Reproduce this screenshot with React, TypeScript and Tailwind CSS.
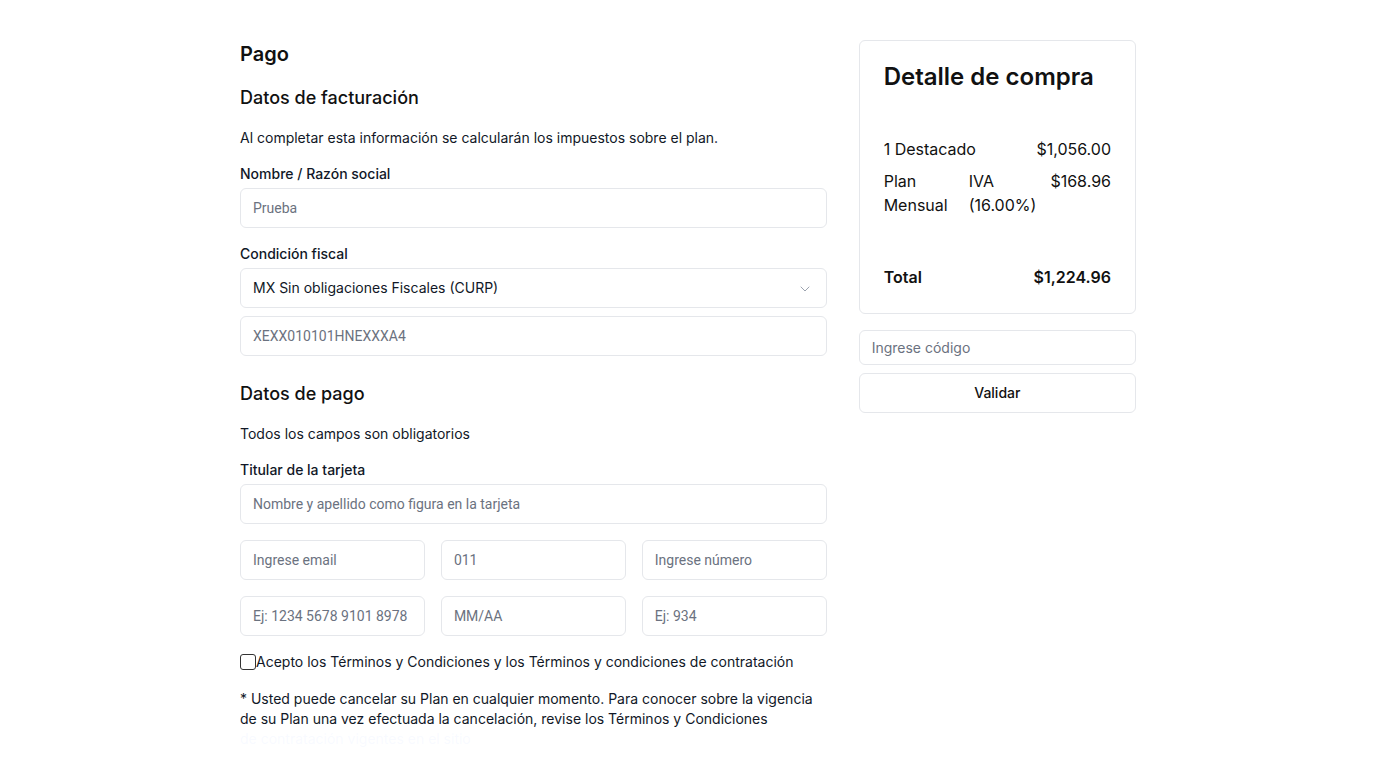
import { ChevronDown } from 'lucide-react';

const roboto = { fontFamily: 'Roboto, "Liberation Sans", sans-serif' };

const inputCls =
  'w-full h-10 px-3 rounded-md border border-[#e5e7eb] bg-white text-sm text-[#111827] placeholder:text-[#6b7280] outline-none';

const Field = ({ placeholder }: { placeholder: string }) => (
  <input className={inputCls} placeholder={placeholder} style={roboto} />
);

const App = () => {
  return (
    <div className="min-h-screen bg-white text-[#111111]" style={{ fontFamily: 'Inter, "Noto Sans", sans-serif' }}>
      <div className="max-w-4xl mx-auto pt-10 grid grid-cols-3 gap-8 items-start">
        {/* Left column: form */}
        <div className="col-span-2">
          <h1 className="text-xl leading-7 font-semibold">Pago</h1>

          <h2 className="mt-4 text-lg leading-7 font-medium">Datos de facturación</h2>
          <p className="mt-4 text-sm leading-5 text-[#111827]">
            Al completar esta información se calcularán los impuestos sobre el plan.
          </p>

          <label className="block mt-4 mb-1 text-sm leading-5 font-medium text-[#111827]">Nombre / Razón social</label>
          <Field placeholder="Prueba" />

          <label className="block mt-4 mb-1 text-sm leading-5 font-medium text-[#111827]">Condición fiscal</label>
          <div className="relative">
            <select
              className="w-full h-10 pl-3 pr-10 rounded-md border border-[#e5e7eb] bg-white text-sm text-[#111827] appearance-none outline-none"
              defaultValue="curp"
            >
              <option value="curp">MX Sin obligaciones Fiscales (CURP)</option>
            </select>
            <ChevronDown className="absolute right-[14px] top-[13px] w-4 h-4 text-[#9ca3af]" strokeWidth={1.5} />
          </div>
          <div className="mt-2">
            <Field placeholder="XEXX010101HNEXXXA4" />
          </div>

          <h2 className="mt-6 text-lg leading-7 font-medium">Datos de pago</h2>
          <p className="mt-4 text-sm leading-5 text-[#111827]">Todos los campos son obligatorios</p>

          <label className="block mt-4 mb-1 text-sm leading-5 font-medium text-[#111827]">Titular de la tarjeta</label>
          <Field placeholder="Nombre y apellido como figura en la tarjeta" />

          <div className="mt-4 grid grid-cols-3 gap-4">
            <Field placeholder="Ingrese email" />
            <Field placeholder="011" />
            <Field placeholder="Ingrese número" />
          </div>
          <div className="mt-4 grid grid-cols-3 gap-4">
            <Field placeholder="Ej: 1234 5678 9101 8978" />
            <Field placeholder="MM/AA" />
            <Field placeholder="Ej: 934" />
          </div>

          <label className="mt-4 flex items-center text-sm leading-5 text-[#111827]">
            <span className="w-4 h-4 rounded-[3px] border border-[#333] bg-white shrink-0" />
            Acepto los Términos y Condiciones y los Términos y condiciones de contratación
          </label>

          <p className="mt-[17px] text-sm leading-5 text-[#111827]">
            * Usted puede cancelar su Plan en cualquier momento. Para conocer sobre la vigencia de su Plan una vez
            efectuada la cancelación, revise los Términos y Condiciones
            <span className="block text-[#2563eb]">de contratación vigentes en el sitio</span>
          </p>
        </div>

        {/* Right column: summary */}
        <div>
          <div className="rounded-md border border-[#e5e7eb] px-6 pt-5 pb-6">
            <h3 className="text-2xl leading-8 font-semibold">Detalle de compra</h3>
            <div className="mt-11 flex justify-between text-base leading-6">
              <span>1 Destacado</span>
              <span>$1,056.00</span>
            </div>
            <div className="mt-2 grid grid-cols-[85px_1fr_auto] text-base leading-6">
              <span>
                Plan
                <br />
                Mensual
              </span>
              <span>
                IVA
                <br />
                (16.00%)
              </span>
              <span>$168.96</span>
            </div>
            <div className="mt-12 flex justify-between text-base leading-6 font-semibold">
              <span>Total</span>
              <span>$1,224.96</span>
            </div>
          </div>
          <input
            className="mt-4 w-full h-[35px] px-3 rounded-md border border-[#e5e7eb] text-sm text-[#111827] placeholder:text-[#6b7280] outline-none"
            placeholder="Ingrese código"
          />
          <button className="mt-2 w-full h-10 rounded-md border border-[#e5e7eb] bg-white text-sm font-medium text-[#111111]">
            Validar
          </button>
        </div>
      </div>

      {/* bottom overlay covering the rest of the footnote */}
      <div className="fixed left-0 right-0 bottom-0 h-[36px] bg-white/[0.97]" />
    </div>
  );
};

export default App;
